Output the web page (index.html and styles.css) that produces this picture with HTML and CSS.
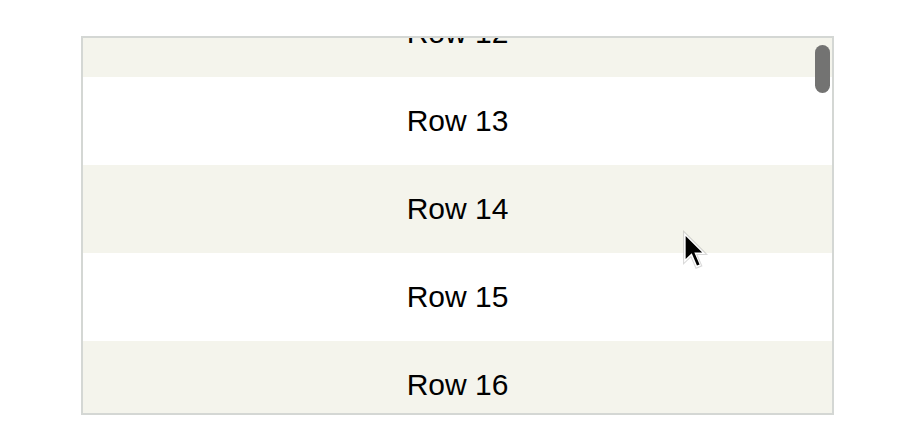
FILE: index.html
```html
<!doctype html>
<html lang="en">
<head>
	<meta charset="UTF-8">
	<title>Rows</title>
	<link rel="stylesheet" href="styles.css">
</head>
<body>
	<div class="page">
		<div class="viewport">
			<div class="list" id="list"></div>
			<div class="thumb"></div>
		</div>
	</div>
	<svg class="cursor" width="28" height="40" viewBox="0 0 20 29">
		<path d="M1 1 L1 24.5 L6.3 19.3 L10 27.8 L14.2 26 L10.6 17.8 L17.8 17.8 Z" fill="#fff" stroke="rgba(0,0,0,0.15)" stroke-width="0.8"/>
		<path d="M2.5 4.3 L2.5 21 L6.9 16.8 L10.7 25.8 L12.6 25 L8.8 16.3 L14.5 16.3 Z" fill="#000"/>
	</svg>
	<script>
		//只渲染可见区域附近的行
		var list = document.getElementById('list');
		var first = 12, last = 16, html = '';
		for (var i = first; i <= last; i++) {
			html += '<div class="row' + (i % 2 ? '' : ' even') + '">Row ' + i + '</div>';
		}
		list.innerHTML = html;
		list.scrollTop = 49;
	</script>
</body>
</html>
```

FILE: styles.css
```css
* { margin: 0; padding: 0; box-sizing: border-box;}
html, body { background: #fff;}
body { font-family: "Liberation Sans", Arial, sans-serif; color: #000;}
.page { padding: 36px 0 0 81px;}
.viewport { width: 753px; height: 379px; border: 2px solid #d4d7d4; position: relative;}
.list { height: 100%; overflow-y: scroll; scrollbar-width: none;}
.list::-webkit-scrollbar { display: none;}
.row { height: 88px; line-height: 88px; text-align: center; font-size: 30px;}
.row.even { background: #f4f4ec;}
.thumb { position: absolute; top: 7px; left: 732px; width: 15px; height: 48px; border-radius: 8px; background: #737372;}
.cursor { position: absolute; left: 682px; top: 230px;}
```
